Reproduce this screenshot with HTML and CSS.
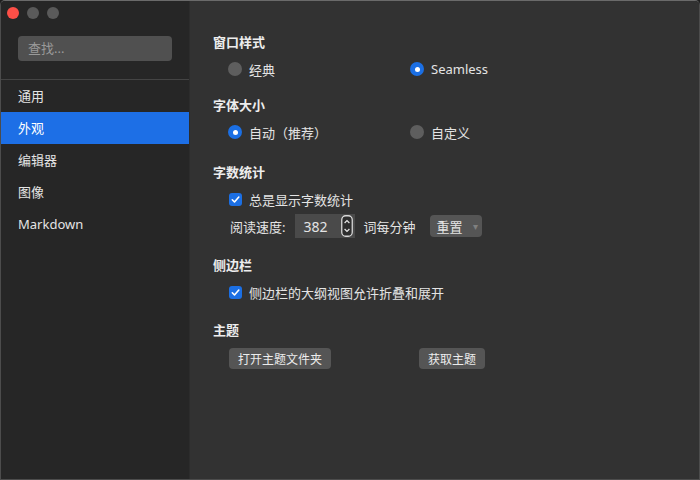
FILE: index.html
```html
<!DOCTYPE html>
<html>
<head>
  <title>偏好设置</title>
  <link rel="stylesheet" href="styles.css">
</head>
<body>
  <div class="window">
    <div class="sidebar">
      <div class="titlebar">
        <span class="light red"></span>
        <span class="light"></span>
        <span class="light"></span>
      </div>
      <div class="search">查找...</div>
      <ul class="nav">
        <li>通用</li>
        <li class="active">外观</li>
        <li>编辑器</li>
        <li>图像</li>
        <li>Markdown</li>
      </ul>
    </div>

    <div class="main">
      <div class="section s1">
        <h2>窗口样式</h2>
        <div class="options">
          <label class="opt"><span class="radio"></span>经典</label>
          <label class="opt"><span class="radio on"></span>Seamless</label>
        </div>
      </div>

      <div class="section s2">
        <h2>字体大小</h2>
        <div class="options">
          <label class="opt"><span class="radio on"></span>自动（推荐）</label>
          <label class="opt"><span class="radio"></span>自定义</label>
        </div>
      </div>

      <div class="section s3">
        <h2>字数统计</h2>
        <label class="opt check-row"><span class="check">
          <svg width="13" height="13" viewBox="0 0 13 13"><path d="M3.3 6.8 L5.5 9 L9.8 4" fill="none" stroke="#fff" stroke-width="1.6" stroke-linecap="round" stroke-linejoin="round"/></svg>
        </span>总是显示字数统计</label>
        <div class="speed-row">
          <span>阅读速度:</span>
          <div class="num">
            <span>382</span>
            <svg class="stepper" width="12" height="22" viewBox="0 0 12 22">
              <rect x="0.75" y="0.75" width="10.5" height="20.5" rx="4" fill="#2e2e2e" stroke="#d8d8d8" stroke-width="1.3"/>
              <path d="M3.6 8 L6 5.5 L8.4 8" fill="none" stroke="#e8e8e8" stroke-width="1.2"/>
              <path d="M3.6 14 L6 16.5 L8.4 14" fill="none" stroke="#e8e8e8" stroke-width="1.2"/>
            </svg>
          </div>
          <span>词每分钟</span>
          <div class="select">重置<span class="caret">▾</span></div>
        </div>
      </div>

      <div class="section s4">
        <h2>侧边栏</h2>
        <label class="opt check-row"><span class="check">
          <svg width="13" height="13" viewBox="0 0 13 13"><path d="M3.3 6.8 L5.5 9 L9.8 4" fill="none" stroke="#fff" stroke-width="1.6" stroke-linecap="round" stroke-linejoin="round"/></svg>
        </span>侧边栏的大纲视图允许折叠和展开</label>
      </div>

      <div class="section s5">
        <h2>主题</h2>
        <div class="buttons">
          <button class="btn">打开主题文件夹</button>
          <button class="btn">获取主题</button>
        </div>
      </div>
    </div>
  </div>
</body>
</html>
```

FILE: styles.css
```css
* { box-sizing: border-box; }
body { margin: 0; font-family: "Noto Sans", "Noto Sans CJK SC", sans-serif; font-size: 13px; color: #e4e4e4; background: #1e1e1e; }
.window { width: 700px; height: 480px; display: flex; border: 1px solid #4c4c4c; border-top-color: #6a6a6a; border-radius: 5px 5px 0 0; overflow: hidden; }

.sidebar { width: 189px; background: #262626; border-right: 1px solid #2c2c2c; }
.titlebar { height: 23px; display: flex; align-items: center; gap: 8px; padding-left: 6px; }
.light { width: 12px; height: 12px; border-radius: 50%; background: #5a5a5a; }
.light.red { background: #fd4f47; }
.search { margin: 12px 17px 0 17px; height: 25px; background: #505050; border-radius: 4px; color: #9a9a9a; padding-left: 10px; line-height: 25px; }
.nav { list-style: none; margin: 18px 0 0 0; padding: 0; border-top: 1px solid #444; }
.nav li { height: 32px; line-height: 32px; padding-left: 17px; }
.nav li.active { background: #1d6fe6; color: #fff; }

.main { flex: 1; background: #323232; padding: 32px 0 0 23px; }
.section h2 { margin: 0 0 9px 0; font-size: 13px; font-weight: bold; line-height: 18px; color: #ededed; }
.s1 { margin-bottom: 18px; }
.s2 { margin-bottom: 22px; }
.s3 { margin-bottom: 18px; }
.s4 { margin-bottom: 20px; }

.options { display: grid; grid-template-columns: 182px auto; padding-left: 15px; }
.opt { display: flex; align-items: center; gap: 7px; height: 18px; }
.radio { width: 14px; height: 14px; border-radius: 50%; background: #5e5e5e; display: flex; align-items: center; justify-content: center; }
.radio.on { background: #1b6fe4; }
.radio.on::after { content: ""; width: 5px; height: 5px; border-radius: 50%; background: #fff; }

.check-row { padding-left: 16px; }
.check { width: 13px; height: 13px; border-radius: 3px; background: #1b6fe4; display: flex; }

.speed-row { display: flex; align-items: center; gap: 8px; margin-top: 6px; padding-left: 17px; height: 24px; }
.num { margin-left: 2px; width: 60px; height: 24px; background: #4a4a4a; display: flex; align-items: center; justify-content: space-between; padding: 0 2px 0 8px; font-size: 14px; }
.stepper { display: block; }
.select { margin-left: 6px; width: 52px; height: 22px; background: #555; border-radius: 4px; padding-left: 7px; display: flex; align-items: center; justify-content: space-between; padding-right: 4px; }
.caret { color: #808080; font-size: 10px; }

.buttons { display: grid; grid-template-columns: 190px auto; padding-left: 16px; justify-items: start; margin-top: 8px; }
.btn { height: 21px; background: #555; border: none; border-radius: 4px; color: #ececec; font: inherit; font-size: 12px; padding: 0 9px; cursor: pointer; }
```
